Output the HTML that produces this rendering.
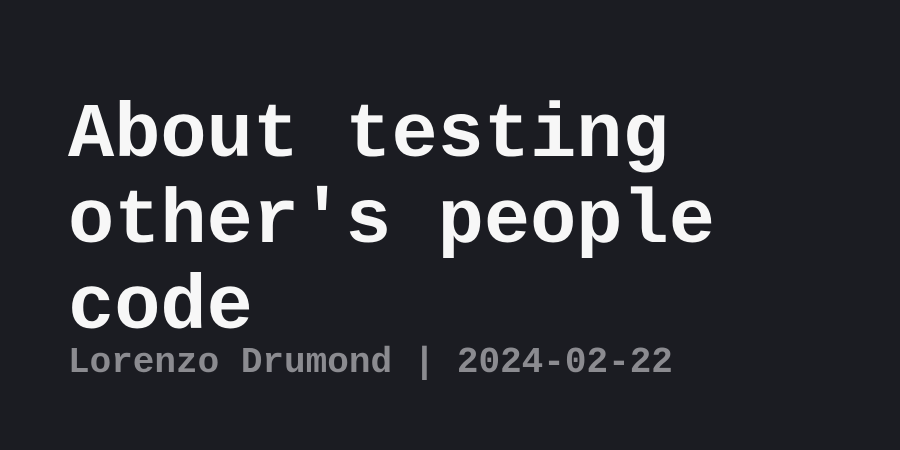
<!DOCTYPE html>
<html><head><style>
html,body{margin:0;padding:0;}
body{width:900px;height:450px;background:#1b1c22;position:relative;overflow:hidden;font-family:"Liberation Mono",monospace;}
.t{position:absolute;left:68px;top:94px;font-size:77px;line-height:86px;font-weight:bold;color:#f7f7f7;white-space:pre;}
.s{position:absolute;left:68px;top:343px;font-size:36px;line-height:40px;font-weight:bold;color:#8b8b90;white-space:pre;}
</style></head><body>
<div class="t">About testing
other's people
code</div>
<div class="s">Lorenzo Drumond | 2024-02-22</div>
</body></html>
